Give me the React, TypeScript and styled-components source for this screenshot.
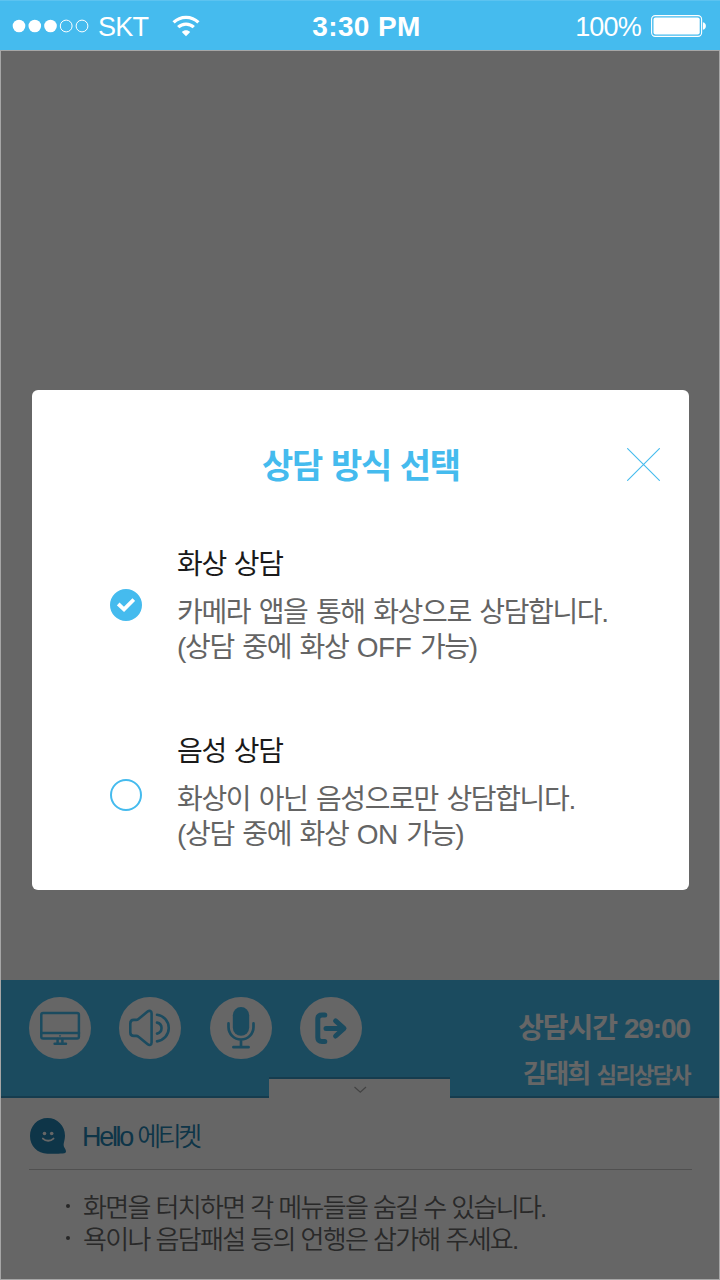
import React, { useState } from "react";
import styled, { createGlobalStyle } from "styled-components";

const BLUE = "#45bbee";
const NAVY = "#2384b4";
const KR = '"Noto Sans CJK KR", "Noto Sans", sans-serif';
const LATIN = '"Liberation Sans", Arial, sans-serif';
const MIXED = '"Liberation Sans", "Noto Sans CJK KR", sans-serif';

const GlobalStyle = createGlobalStyle`
  *, *::before, *::after { box-sizing: border-box; }
  body { margin: 0; font-family: ${KR}; }
  button { padding: 0; border: 0; background: none; font: inherit; cursor: pointer; }
  h1, h2, h3, p, ul { margin: 0; padding: 0; }
  svg { display: block; }
`;

const Screen = styled.div`
  display: flex;
  flex-direction: column;
  width: 720px;
  height: 1280px;
  overflow: hidden;
  white-space: nowrap;
`;

const StatusBar = styled.header`
  display: grid;
  grid-template-columns: 1fr auto 1fr;
  align-items: center;
  flex: none;
  height: 50px;
  padding: 2px 14px 0 12px;
  border-top: 1px solid #5cc3f0;
  background: ${BLUE};
  color: #fff;
  font-family: ${LATIN};
  font-size: 27px;
  line-height: 48px;

  svg {
    margin-bottom: 2px;
  }
`;

const StatusGroup = styled.div<{ $end?: boolean }>`
  display: flex;
  align-items: center;
  justify-content: ${(p) => (p.$end ? "flex-end" : "flex-start")};
`;

const Carrier = styled.span`
  margin: 0 24px 0 8px;
  letter-spacing: -0.8px;
`;

const Clock = styled.span`
  font-size: 28px;
  font-weight: 700;
  letter-spacing: 0.4px;
  padding-left: 15px;
`;

const Percent = styled.span`
  margin-right: 10px;
  letter-spacing: -0.8px;
`;

const Stage = styled.main`
  position: relative;
  display: flex;
  flex-direction: column;
  justify-content: flex-end;
  flex: 1;
  border: 1px solid #a6a6a6;
  background: #fff;
`;

const Toolbar = styled.section`
  position: relative;
  display: flex;
  justify-content: space-between;
  height: 118px;
  padding: 17px 28px 0;
  border-bottom: 2px solid #3996c3;
  background: ${BLUE};
`;

const ToolList = styled.div`
  display: flex;
  align-items: flex-start;
  gap: 28.4px;
`;

const ToolButton = styled.button`
  width: 62px;
  height: 62px;
  border-radius: 50%;
  background: #fff;
  color: ${BLUE};
`;

const SessionInfo = styled.div`
  display: flex;
  flex-direction: column;
  align-items: flex-end;
  padding: 12px 1px 0 0;
  color: #fff;
  font-weight: 700;
`;

const SessionTime = styled.p`
  font-family: ${MIXED};
  font-size: 28px;
  line-height: 40px;
  letter-spacing: -1.1px;
  word-spacing: 0.4px;
`;

const Counselor = styled.p`
  margin-top: 3px;
  font-size: 26px;
  line-height: 40px;
  letter-spacing: -1.7px;
  word-spacing: 3px;
`;

const Role = styled.span`
  font-size: 22px;
  letter-spacing: -1.6px;
`;

const PullTab = styled.button`
  position: absolute;
  left: 268px;
  bottom: -2px;
  display: flex;
  justify-content: center;
  width: 181px;
  height: 21px;
  padding-top: 7px;
  border-top: 2px solid #3996c3;
  background: #fff;
`;

const Etiquette = styled.section`
  height: 181px;
  padding: 16px 27px 0 28px;
`;

const EtiquetteHead = styled.div`
  display: flex;
  align-items: center;
  height: 56px;
  padding: 0 0 12px 1px;
  border-bottom: 1px solid #c8c8c8;
`;

const EtiquetteTitle = styled.h2`
  margin-left: 15px;
  color: ${NAVY};
  font-family: ${LATIN};
  font-size: 27px;
  font-weight: 400;
  line-height: 40px;
  letter-spacing: -2.3px;
`;

const EtiquetteKorean = styled.span`
  font-family: ${KR};
  font-size: 26px;
  font-weight: 350;
  letter-spacing: -3.4px;
`;

const RuleList = styled.ul`
  padding: 20px 0 0 37px;
  list-style: none;
`;

const Rule = styled.li`
  display: flex;
  align-items: center;
  gap: 13px;
  height: 32px;
  color: #666;
  font-family: ${MIXED};
  font-size: 26px;
  font-weight: 350;
  letter-spacing: -1.7px;
  word-spacing: 0.3px;

  &::before {
    content: "";
    width: 4px;
    height: 4px;
    border-radius: 50%;
    background: #606060;
  }
`;

const RuleText = styled.span`
  padding-top: 4px;
  line-height: 30px;
`;

const Dim = styled.div`
  position: absolute;
  inset: 0;
  display: flex;
  align-items: flex-start;
  padding: 339px 30px 0 31px;
  background: rgba(0, 0, 0, 0.6);
`;

const Dialog = styled.div`
  width: 657px;
  height: 500px;
  padding-top: 49px;
  border-radius: 6px;
  background: #fff;
`;

const DialogHead = styled.div`
  display: grid;
  grid-template-columns: 33px 1fr 33px;
  align-items: center;
  height: 50px;
  padding: 0 29px;
`;

const DialogTitle = styled.h1`
  grid-column: 2;
  padding-left: 1px;
  color: ${BLUE};
  font-size: 34px;
  font-weight: 700;
  line-height: 50px;
  letter-spacing: -1.2px;
  word-spacing: 2.200px;
  text-align: center;
`;

const CloseButton = styled.button`
  margin-top: 1px;
`;

const OptionList = styled.div`
  display: flex;
  flex-direction: column;
  gap: 69px;
  padding: 55px 0 0 78px;
`;

const Option = styled.div`
  display: flex;
  align-items: flex-start;
  gap: 35px;
  height: 118px;
  cursor: pointer;
`;

const Radio = styled.span<{ $on: boolean; $drop: number }>`
  display: grid;
  place-items: center;
  width: 32px;
  height: 32px;
  margin-top: ${(p) => p.$drop}px;
  border: 2px solid ${BLUE};
  border-radius: 50%;
  background: ${(p) => (p.$on ? BLUE : "#fff")};
`;

const OptionName = styled.h3`
  margin-bottom: 14px;
  color: #1a1a1a;
  font-size: 28px;
  font-weight: 400;
  line-height: 37px;
  letter-spacing: -1.3px;
  word-spacing: 2.9px;
`;

const OptionText = styled.p`
  color: #646464;
  font-family: ${MIXED};
  font-size: 28px;
  font-weight: 400;
  line-height: 35px;
  letter-spacing: -1.35px;
  word-spacing: 2px;
`;

const LatinWord = styled.span`
  letter-spacing: -0.4px;
`;

const SignalDots = () => (
  <svg width="78" height="14" viewBox="0 0 78 14" fill="none" stroke="#fff">
    <circle cx="7" cy="7" r="6.3" fill="#fff" stroke="none" />
    <circle cx="22.8" cy="7" r="6.3" fill="#fff" stroke="none" />
    <circle cx="38.5" cy="7" r="6.3" fill="#fff" stroke="none" />
    <circle cx="54.2" cy="7" r="5.9" />
    <circle cx="70" cy="7" r="5.9" />
  </svg>
);

const WifiIcon = () => (
  <svg width="28" height="22" viewBox="0 0 28 22" fill="none" stroke="#fff" strokeWidth="3.2">
    <path d="M1.6 7.4C8.4 .6 19.6 .6 26.4 7.4" />
    <path d="M6.2 12.2C10.6 8 17.4 8 21.8 12.2" />
    <path d="M14 21.3 9.8 16.9c2.4-2.2 6-2.2 8.4 0Z" fill="#fff" stroke="none" />
  </svg>
);

const BatteryIcon = () => (
  <svg width="55" height="22" viewBox="0 0 55 22">
    <rect x="0.6" y="0.6" width="50" height="20.8" rx="3.6" fill="none" stroke="#fff" strokeWidth="1.1" />
    <rect x="2.5" y="2.6" width="46.2" height="16.8" rx="2" fill="#fff" />
    <path d="M51.9 7.2c2.2.6 3 2 3 3.8s-.8 3.200-3 3.800Z" fill="#fff" />
  </svg>
);

const MonitorIcon = () => (
  <svg width="62" height="62" viewBox="0 0 62 62" fill="none" stroke="currentColor" strokeWidth="2.500">
    <rect x="12.300" y="16" width="37.600" height="25.500" rx="1.800" />
    <path d="M12.300 36H50M28.600 42v3.600M33.400 42v3.600M25.600 46.700H37" strokeLinecap="round" />
    <circle cx="31" cy="38.800" r="0.900" fill="currentColor" stroke="none" />
  </svg>
);

const SpeakerIcon = () => (
  <svg width="62" height="62" viewBox="0 0 62 62" fill="none" stroke="currentColor" strokeWidth="2.600" strokeLinejoin="round" strokeLinecap="round">
    <path d="M11.300 26.500C11.300 24 12.500 22.900 14.800 22.900H17.200C18.200 22.900 18.800 22.600 19.500 22L28.600 14.600C30.500 13.100 32.600 14 32.600 16.200V45.600C32.600 47.800 30.500 48.800 28.700 47.300L19.500 39.800C18.800 39.200 18.200 38.900 17.200 38.900H14.800C12.500 38.900 11.300 37.800 11.300 35.500Z" />
    <path d="M38 25.600a5.600 5.600 0 0 1 0 11M38 17.800a13.400 13.400 0 0 1 0 26.600" />
  </svg>
);

const MicIcon = () => (
  <svg width="62" height="62" viewBox="0 0 62 62" fill="none" stroke="currentColor" strokeWidth="2.700" strokeLinecap="round">
    <rect x="22.800" y="10" width="16.400" height="28.800" rx="8.200" fill="currentColor" stroke="none" />
    <path d="M18.500 26.400v3.600a12.500 12.500 0 0 0 25 0v-3.600M31 42.500V50M23.400 50.200H38.600" />
  </svg>
);

const ExitIcon = () => (
  <svg width="62" height="62" viewBox="0 0 62 62" fill="none" stroke="currentColor" strokeWidth="5" strokeLinecap="round" strokeLinejoin="round">
    <path d="M24.800 18H22C19 18 17.800 19.300 17.800 22V40.400C17.800 43.100 19 44.400 22 44.400H24.800" />
    <path d="M26 31.400H42M35.600 23.900 44 31.400 35.600 39" />
  </svg>
);

const ChatFace = () => (
  <svg width="37" height="36" viewBox="0 0 37 36">
    <path
      d="M17.500 0C27.300 0 35 7.800 35 17.700c0 4-1.400 6.600-1.400 9.300 0 2.700 2.400 4.200 2.400 6.200 0 1.700-1.300 2.100-3.200 2.300-4.300.300-10 .300-15.300.200C7.500 35.600 0 28 0 18S7.500 0 17.500 0Z"
      fill={NAVY}
    />
    <circle cx="14.500" cy="15.500" r="1.800" fill="#fff" />
    <circle cx="21.700" cy="15.500" r="1.800" fill="#fff" />
    <path d="M12.900 20.600c3 2.800 7.600 2.800 10.600 0" fill="none" stroke="#fff" strokeWidth="1.900" strokeLinecap="round" />
  </svg>
);

const CloseIcon = () => (
  <svg width="33" height="33" viewBox="0 0 33 33" stroke={BLUE} strokeWidth="1.100">
    <path d="M.2.2 32.800 32.800M32.800.2.2 32.800" />
  </svg>
);

const options = [
  {
    name: "화상 상담",
    summary: "카메라 앱을 통해 화상으로 상담합니다.",
    toggle: "OFF",
    drop: 45,
  },
  {
    name: "음성 상담",
    summary: "화상이 아닌 음성으로만 상담합니다.",
    toggle: "ON",
    drop: 48,
  },
];

const rules = ["화면을 터치하면 각 메뉴들을 숨길 수 있습니다.", "욕이나 음담패설 등의 언행은 삼가해 주세요."];

const tools = [MonitorIcon, SpeakerIcon, MicIcon, ExitIcon];

export default function App() {
  const [selected, setSelected] = useState(0);

  return (
    <>
      <GlobalStyle />
      <Screen>
        <StatusBar>
          <StatusGroup>
            <SignalDots />
            <Carrier>SKT</Carrier>
            <WifiIcon />
          </StatusGroup>
          <Clock>3:30 PM</Clock>
          <StatusGroup $end>
            <Percent>100%</Percent>
            <BatteryIcon />
          </StatusGroup>
        </StatusBar>
        <Stage>
          <Toolbar>
            <ToolList>
              {tools.map((Icon, i) => (
                <ToolButton key={i}>
                  <Icon />
                </ToolButton>
              ))}
            </ToolList>
            <SessionInfo>
              <SessionTime>상담시간 29:00</SessionTime>
              <Counselor>
                김태희 <Role>심리상담사</Role>
              </Counselor>
            </SessionInfo>
            <PullTab>
              <svg width="14" height="8" viewBox="0 0 14 8" fill="none" stroke="#a8a8a8" strokeWidth="1.300">
                <path d="M1.500 1 7.300 6.200 13 1" />
              </svg>
            </PullTab>
          </Toolbar>
          <Etiquette>
            <EtiquetteHead>
              <ChatFace />
              <EtiquetteTitle>
                Hello <EtiquetteKorean>에티켓</EtiquetteKorean>
              </EtiquetteTitle>
            </EtiquetteHead>
            <RuleList>
              {rules.map((rule) => (
                <Rule key={rule}>
                  <RuleText>{rule}</RuleText>
                </Rule>
              ))}
            </RuleList>
          </Etiquette>
          <Dim>
            <Dialog>
              <DialogHead>
                <DialogTitle>상담 방식 선택</DialogTitle>
                <CloseButton>
                  <CloseIcon />
                </CloseButton>
              </DialogHead>
              <OptionList>
                {options.map((option, i) => (
                  <Option key={option.name} onClick={() => setSelected(i)}>
                    <Radio $on={selected === i} $drop={option.drop}>
                      {selected === i && (
                        <svg width="18" height="14" viewBox="0 0 18 14" fill="none" stroke="#fff" strokeWidth="3.800">
                          <path d="M1.200 6 7 11.300 16.800 1.600" />
                        </svg>
                      )}
                    </Radio>
                    <div>
                      <OptionName>{option.name}</OptionName>
                      <OptionText>{option.summary}</OptionText>
                      <OptionText>
                        (상담 중에 화상 <LatinWord>{option.toggle}</LatinWord> 가능)
                      </OptionText>
                    </div>
                  </Option>
                ))}
              </OptionList>
            </Dialog>
          </Dim>
        </Stage>
      </Screen>
    </>
  );
}
